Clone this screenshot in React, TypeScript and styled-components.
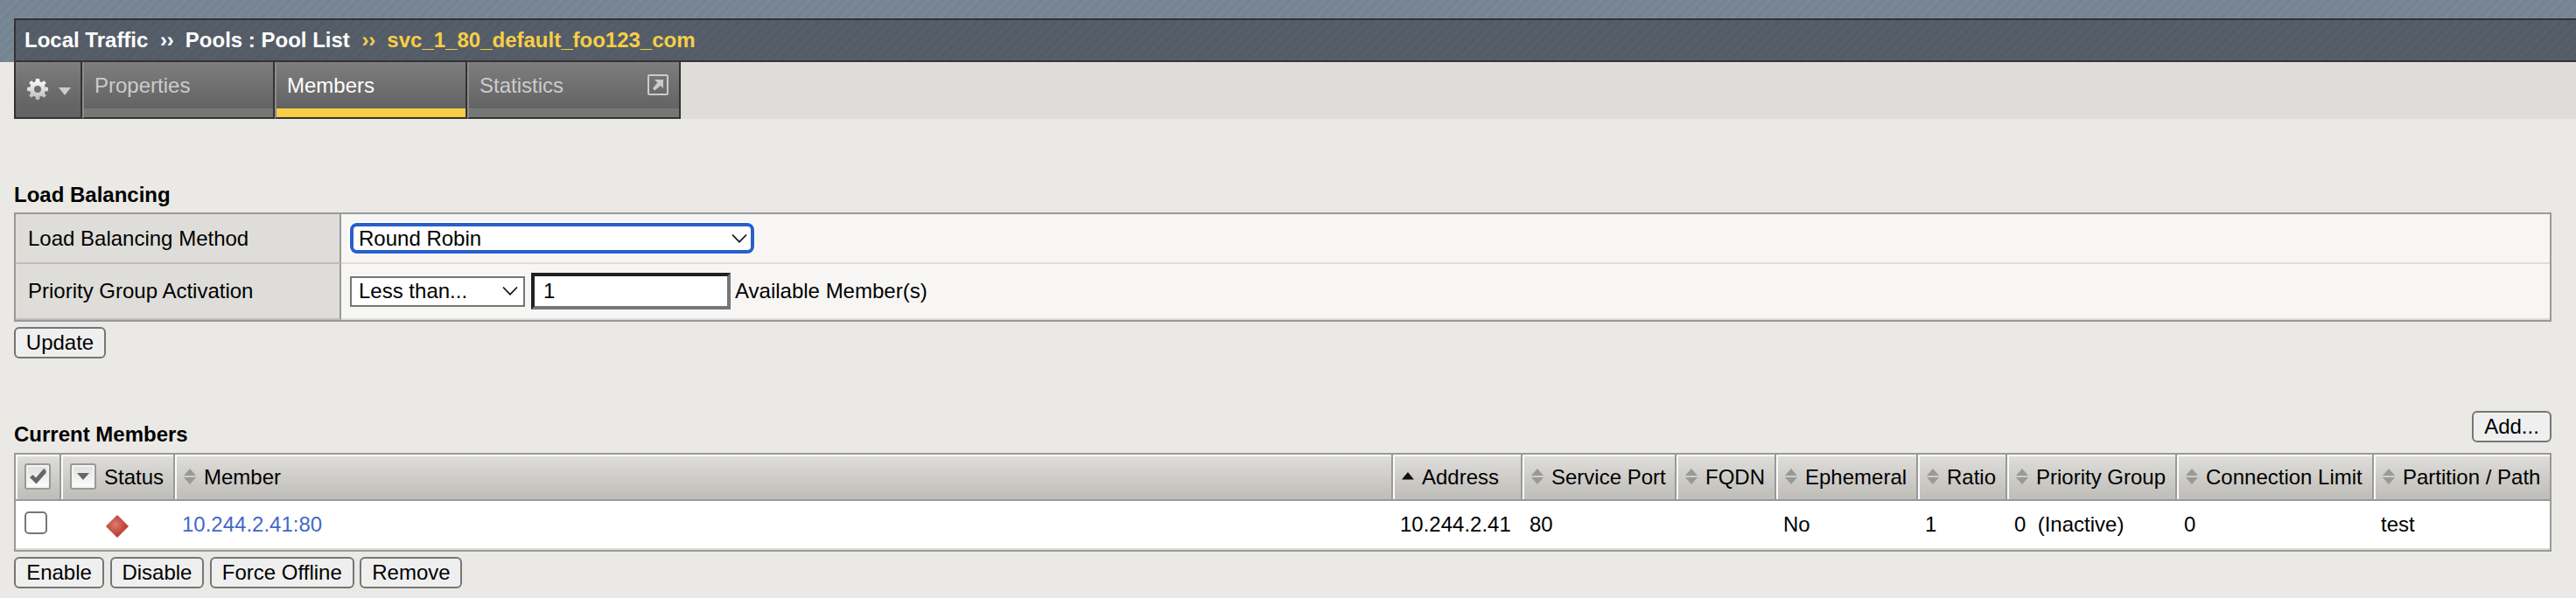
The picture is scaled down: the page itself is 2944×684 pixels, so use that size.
import React from "react";
import styled, { createGlobalStyle, css } from "styled-components";

const Global = createGlobalStyle`
  * { box-sizing: border-box; }
  body {
    margin: 0;
    background: #eae9e5;
    font-family: "Liberation Sans", Arial, sans-serif;
    font-size: 24px;
    line-height: 28px;
    color: #000;
  }
  button, select, input { font: inherit; color: inherit; margin: 0; }
`;

const Page = styled.div`
  height: 684px;
  white-space: nowrap;
  overflow: hidden;
`;

const Masthead = styled.header`
  height: 71px;
  padding: 21px 0 0 16px;
  background: repeating-linear-gradient(135deg, #748493 0 4px, #7a8894 4px 8px);
`;

const Breadcrumb = styled.nav`
  display: flex;
  align-items: center;
  height: 50px;
  padding: 0 0 1px 10px;
  border: 2px solid #333;
  border-right: 0;
  background: repeating-linear-gradient(135deg, #525c67 0 4px, #575e69 4px 8px);
  color: #fff;
  font-weight: bold;
`;

const Crumb = styled.span<{ $current?: boolean }>`
  color: ${(p) => (p.$current ? "#f8ce46" : "#fff")};
`;

const Chevrons = styled(Crumb)`
  margin: 0 13px 0 13.5px;
`;

const TabBar = styled.div`
  display: flex;
  height: 65px;
  margin-left: 16px;
  background: #deddd9;
`;

const Tab = styled.div<{ $width: number; $active?: boolean; $menu?: boolean }>`
  display: flex;
  justify-content: space-between;
  width: ${(p) => p.$width}px;
  height: 65px;
  padding: 13px 12px 0;
  border-right: 2px solid #333;
  border-bottom: 2px solid #333;
  border-left: 2px solid #8c8c8c;
  color: ${(p) => (p.$active ? "#fff" : "#ccc")};
  background: linear-gradient(
        ${(p) => (p.$active ? "#f8ce46, #f8ce46" : "#777, #777")}
      )
      bottom / 100% 10px no-repeat,
    linear-gradient(#7e7e7e, #646464 50px);
  ${(p) =>
    p.$menu &&
    css`
      justify-content: flex-start;
      align-items: flex-start;
      gap: 11px;
      border-left-color: #333;
      padding: 18px 0 0 12px;
      background: linear-gradient(#7e7e7e, #646464 50px);
    `}
`;

const Content = styled.main`
  width: 2916px;
  padding-left: 16px;
`;

const SectionHead = styled.div<{ $height: number }>`
  display: flex;
  justify-content: space-between;
  align-items: flex-end;
  height: ${(p) => p.$height}px;
`;

const Title = styled.h2<{ $bottom: number }>`
  margin: 0 0 ${(p) => p.$bottom}px;
  font-size: 24px;
`;

const Settings = styled.div`
  border: 2px solid #999;
  margin-bottom: 6px;
`;

const SettingRow = styled.div<{ $height: number }>`
  display: grid;
  grid-template-columns: 372px 1fr;
  height: ${(p) => p.$height}px;
`;

const SettingLabel = styled.div`
  display: flex;
  align-items: center;
  padding-left: 14px;
  border-right: 2px solid #999;
  border-bottom: 2px solid #bdbdbb;
  background: #deddd9;
`;

const SettingValue = styled.div`
  display: flex;
  align-items: center;
  padding-left: 10px;
  border-bottom: 2px solid #dddddb;
  background: #f7f6f4;
`;

const SelectBox = styled.div<{ $width: number; $focus?: boolean }>`
  display: flex;
  align-items: center;
  justify-content: space-between;
  width: ${(p) => p.$width}px;
  height: 35px;
  padding: 0 6px 0 8px;
  border: 2px solid #767676;
  background: #fff;
  ${(p) =>
    p.$focus &&
    css`
      padding: 0 4px 0 6px;
      border: 4px solid #285fcb;
      border-radius: 8px;
      box-shadow: 0 0 0 2px #fff;
    `}
`;

const NumberInput = styled.input`
  width: 228px;
  height: 42px;
  margin: 0 5px 0 7px;
  padding: 0 0 0 10px;
  border: 4px solid;
  border-color: #212121 #767676 #767676 #212121;
  border-radius: 0;
  outline: none;
  background: #fff;
`;

const Button = styled.button<{ $width: number; $bottom?: number }>`
  display: block;
  width: ${(p) => p.$width}px;
  height: 36px;
  margin-bottom: ${(p) => p.$bottom ?? 0}px;
  padding: 0;
  border: 2px solid #767676;
  border-radius: 6px;
  background: #efefef;
  line-height: 30px;
`;

const ButtonRow = styled.div`
  display: flex;
  gap: 6.67px;
`;

const Members = styled.div`
  display: grid;
  grid-template-columns: 52px 130px 1392px 148px 176px 114px 162px 102px 194px 225px 1fr;
  border: 2px solid #999;
  margin-bottom: 6px;
`;

const HeadCell = styled.div`
  display: flex;
  align-items: center;
  gap: 9px;
  height: 53px;
  padding-left: 10px;
  border-right: 2px solid #999;
  border-bottom: 2px solid #999;
  background: linear-gradient(#dfdedb, #c1bfba 92%);
  box-shadow: inset 2px 2px 0 #fbfbfa;
  &:nth-child(11) {
    border-right: 0;
  }
`;

const HeadText = styled.span`
  padding-top: 1px;
`;

const Cell = styled.div<{ $pad?: number }>`
  display: flex;
  align-items: center;
  height: 56px;
  padding: 0 0 0 ${(p) => p.$pad ?? 8}px;
  border-bottom: 2px solid #dddddb;
  background: #fff;
`;

const MemberLink = styled.a`
  color: #4169c8;
`;

const Checkbox = styled.span`
  width: 26px;
  height: 26px;
  margin-bottom: 4px;
  border: 2px solid #767676;
  border-radius: 5px;
  background: #fff;
`;

const IconButton = styled.span`
  display: grid;
  place-items: center;
  width: 30px;
  height: 30px;
  margin-bottom: 1px;
  border: 2px solid #999;
  border-radius: 3px;
  background: linear-gradient(#dededb, #fff);
  box-shadow: inset 0 0 0 2px #f4f4f2;
`;

const Chevron = () => (
  <svg width="18" height="12" viewBox="0 0 18 12">
    <path d="M1 1.5 L9 9.8 L17 1.5" fill="none" stroke="#111" strokeWidth="1.8" />
  </svg>
);

const SortIcon = () => (
  <svg width="14" height="18" viewBox="0 0 14 18">
    <path d="M7 0 L14 8 H0 Z M0 10 H14 L7 18 Z" fill="#999" />
  </svg>
);

const SortedIcon = () => (
  <svg width="14" height="18" viewBox="0 0 14 18">
    <path d="M7 4 L14 12.5 H0 Z" fill="#111" />
  </svg>
);

const Gear = () => (
  <svg width="26" height="26" viewBox="-13 -13 26 26">
    <defs>
      <linearGradient id="gear" x1="0" y1="0" x2="0" y2="1">
        <stop offset="0" stopColor="#fff" />
        <stop offset="1" stopColor="#bbb" />
      </linearGradient>
    </defs>
    <path
      fill="url(#gear)"
      fillRule="evenodd"
      d="M-2 -12 H2 L2.6 -8.6 L4.5 -7.8 L7.2 -9.8 L9.8 -7.2 L7.8 -4.5 L8.6 -2.6 L12 -2 V2 L8.6 2.6 L7.8 4.5 L9.8 7.2 L7.2 9.8 L4.5 7.8 L2.6 8.6 L2 12 H-2 L-2.6 8.6 L-4.5 7.8 L-7.2 9.8 L-9.8 7.2 L-7.8 4.5 L-8.6 2.6 L-12 2 V-2 L-8.6 -2.6 L-7.8 -4.5 L-9.8 -7.2 L-7.2 -9.8 L-4.5 -7.8 L-2.6 -8.6 Z M0 -4 A4 4 0 1 0 0 4 A4 4 0 1 0 0 -4 Z"
    />
  </svg>
);

const MenuArrow = styled.svg`
  margin-top: 11px;
`;

const PopOutSvg = styled.svg`
  margin-top: 1px;
`;

const PopOut = () => (
  <PopOutSvg width="24" height="24" viewBox="0 0 24 24">
    <rect x="1" y="1" width="22" height="22" rx="1.5" fill="none" stroke="#ccc" strokeWidth="2" />
    <path d="M8 6 H18 V16 L15 13 L8.2 18.4 L6 16 L11.5 9.5 Z" fill="#ccc" />
  </PopOutSvg>
);

const Diamond = () => (
  <svg width="28" height="28" viewBox="0 0 28 28">
    <defs>
      <radialGradient id="offline" cx="0.42" cy="0.42" r="0.55">
        <stop offset="0" stopColor="#e07a72" />
        <stop offset="1" stopColor="#b9352c" />
      </radialGradient>
    </defs>
    <path d="M14 1.5 L26.5 14 L14 26.5 L1.5 14 Z" fill="url(#offline)" stroke="#b9473f" strokeLinejoin="round" />
  </svg>
);

const DiamondSlot = styled.span`
  display: flex;
  margin-top: 4px;
`;

const SortSlot = styled.span`
  display: flex;
  margin-bottom: 1px;
`;

const sortable = [
  "Service Port",
  "FQDN",
  "Ephemeral",
  "Ratio",
  "Priority Group",
  "Connection Limit",
  "Partition / Path",
];

const SortHead = ({ name, sorted }: { name: string; sorted?: boolean }) => (
  <HeadCell>
    <SortSlot>{sorted ? <SortedIcon /> : <SortIcon />}</SortSlot>
    <HeadText>{name}</HeadText>
  </HeadCell>
);

export default function App() {
  return (
    <Page>
      <Global />
      <Masthead>
        <Breadcrumb>
          <Crumb>Local Traffic</Crumb>
          <Chevrons>››</Chevrons>
          <Crumb>Pools : Pool List</Crumb>
          <Chevrons $current>››</Chevrons>
          <Crumb $current>svc_1_80_default_foo123_com</Crumb>
        </Breadcrumb>
      </Masthead>
      <TabBar>
        <Tab $width={78} $menu>
          <Gear />
          <MenuArrow width="14" height="9" viewBox="0 0 14 9">
            <path d="M0 0 H14 L7 9 Z" fill="#ccc" />
          </MenuArrow>
        </Tab>
        <Tab $width={220}>Properties</Tab>
        <Tab $width={220} $active>
          Members
        </Tab>
        <Tab $width={244}>
          Statistics
          <PopOut />
        </Tab>
      </TabBar>
      <Content>
        <SectionHead $height={107}>
          <Title $bottom={6}>Load Balancing</Title>
        </SectionHead>
        <Settings>
          <SettingRow $height={57}>
            <SettingLabel>Load Balancing Method</SettingLabel>
            <SettingValue>
              <SelectBox $width={462} $focus>
                Round Robin
                <Chevron />
              </SelectBox>
            </SettingValue>
          </SettingRow>
          <SettingRow $height={64}>
            <SettingLabel>Priority Group Activation</SettingLabel>
            <SettingValue>
              <SelectBox $width={200}>
                Less than...
                <Chevron />
              </SelectBox>
              <NumberInput defaultValue="1" />
              Available Member(s)
            </SettingValue>
          </SettingRow>
        </Settings>
        <Button $width={105}>Update</Button>
        <SectionHead $height={108}>
          <Title $bottom={7}>Current Members</Title>
          <Button $width={91} $bottom={12}>
            Add...
          </Button>
        </SectionHead>
        <Members>
          <HeadCell>
            <IconButton>
              <svg width="20" height="20" viewBox="0 0 20 20">
                <path d="M1 11 L4.5 8 L8 11.5 L17 1 L19.5 3 V6 L8.5 18.5 Z" fill="#666" />
              </svg>
            </IconButton>
          </HeadCell>
          <HeadCell>
            <IconButton>
              <svg width="14" height="8" viewBox="0 0 14 8">
                <path d="M0 0 H14 L7 8 Z" fill="#666" />
              </svg>
            </IconButton>
            <HeadText>Status</HeadText>
          </HeadCell>
          <SortHead name="Member" />
          <SortHead name="Address" sorted />
          {sortable.map((name) => (
            <SortHead key={name} name={name} />
          ))}
          <Cell $pad={10}>
            <Checkbox />
          </Cell>
          <Cell $pad={50}>
            <DiamondSlot>
              <Diamond />
            </DiamondSlot>
          </Cell>
          <Cell>
            <MemberLink>10.244.2.41:80</MemberLink>
          </Cell>
          <Cell>10.244.2.41</Cell>
          <Cell>80</Cell>
          <Cell />
          <Cell>No</Cell>
          <Cell>1</Cell>
          <Cell>0&nbsp; (Inactive)</Cell>
          <Cell>0</Cell>
          <Cell>test</Cell>
        </Members>
        <ButtonRow>
          <Button $width={103}>Enable</Button>
          <Button $width={107.5}>Disable</Button>
          <Button $width={165}>Force Offline</Button>
          <Button $width={117}>Remove</Button>
        </ButtonRow>
      </Content>
    </Page>
  );
}
